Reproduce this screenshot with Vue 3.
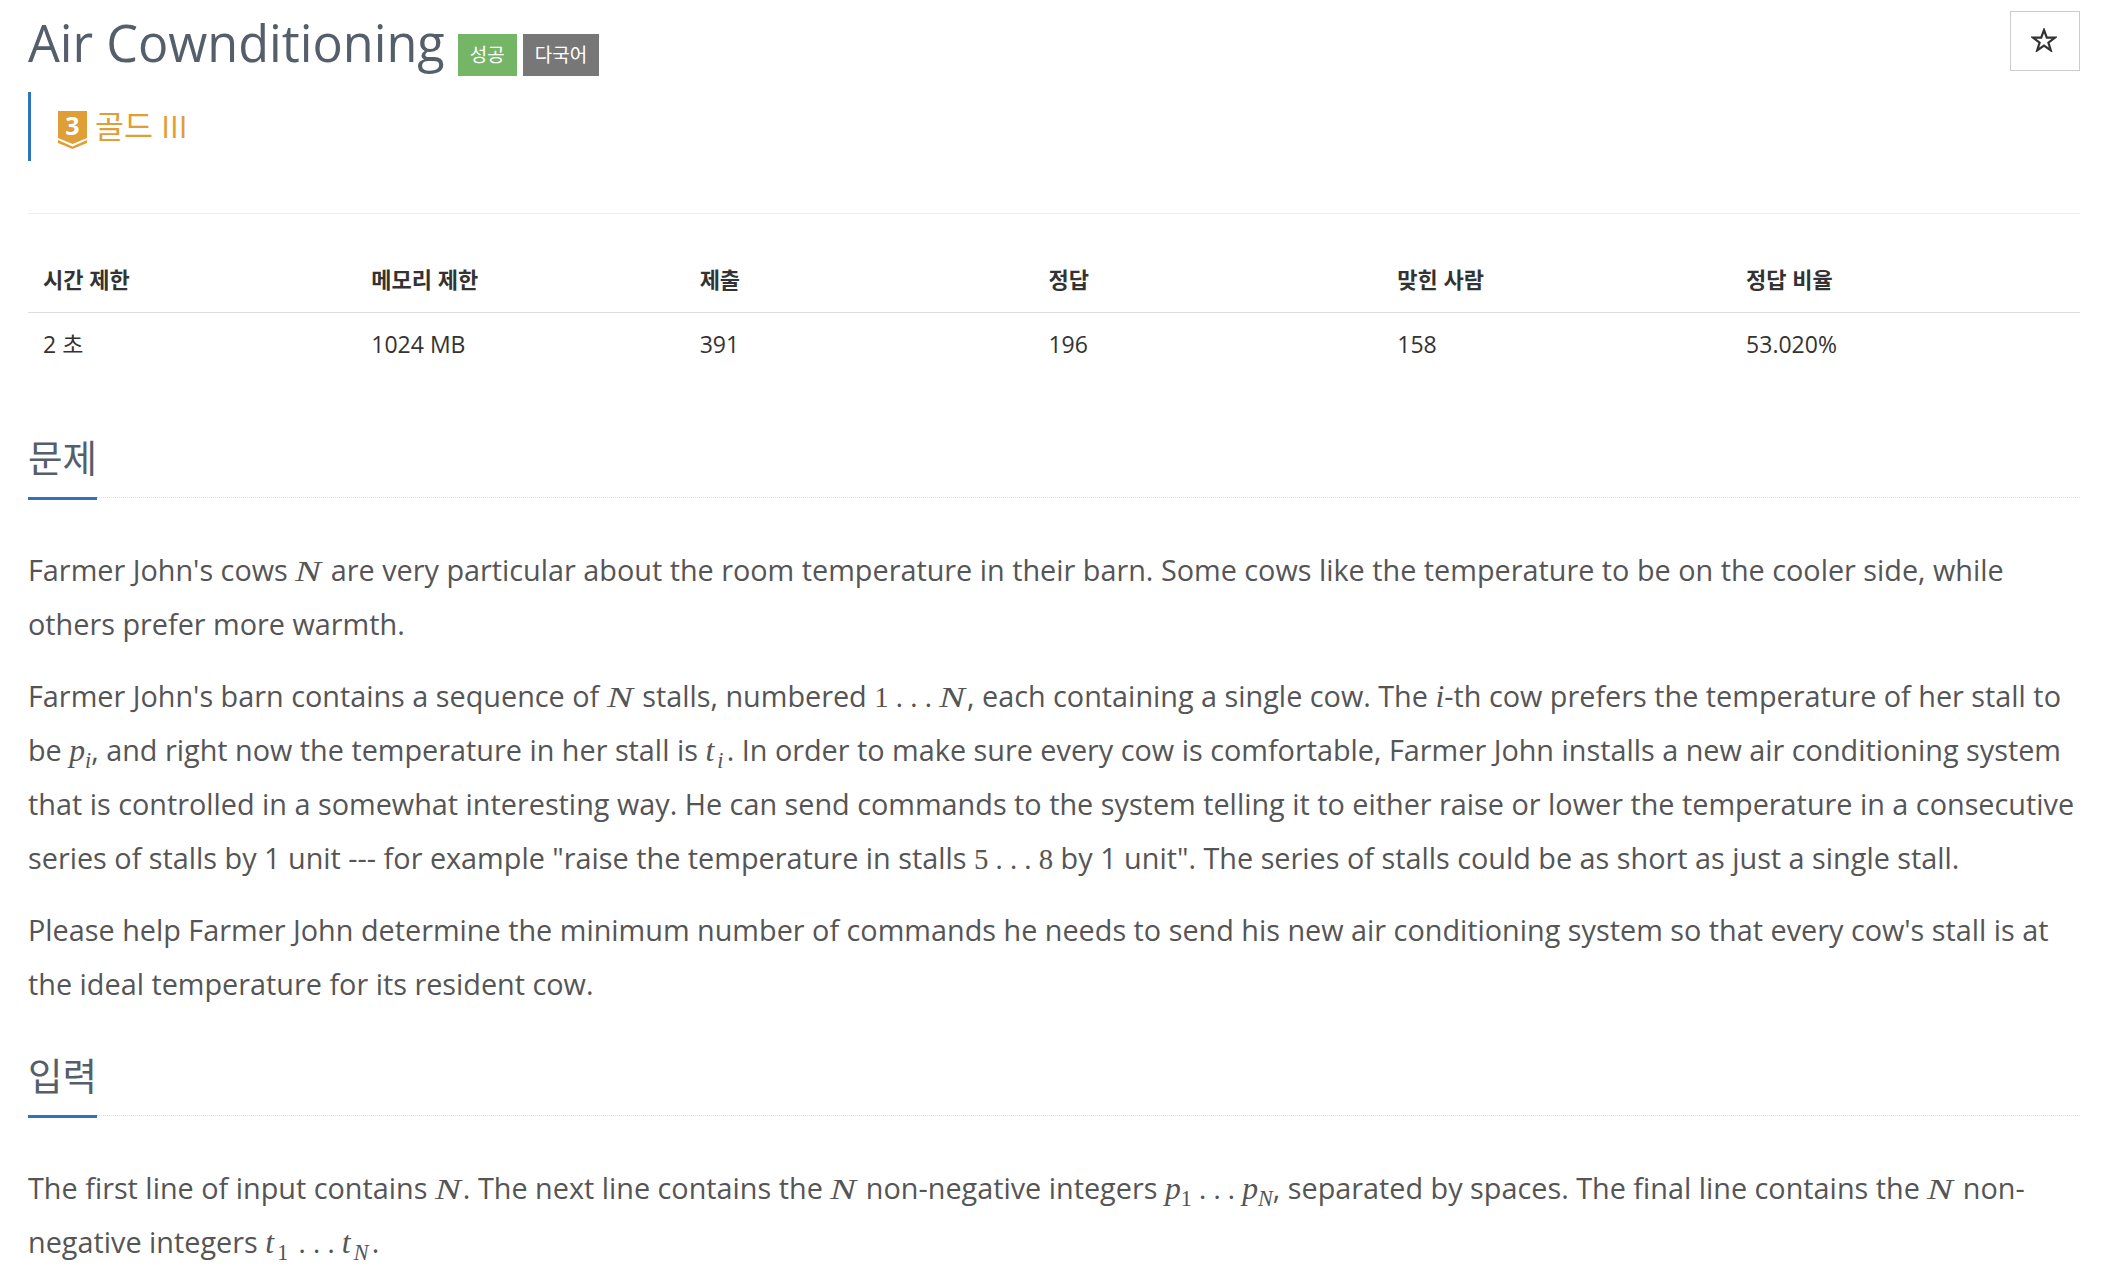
<template>
  <div class="page">
    <div class="top">
      <div class="top-left">
        <h1 class="title">
          <span>Air Cownditioning</span>
          <span class="label green">성공</span>
          <span class="label gray">다국어</span>
        </h1>
        <div class="tier">
          <svg class="tier-icon" viewBox="0 0 29 38" width="29" height="38">
            <path d="M0 0H29V27L14.500 33L0 27Z" fill="#e09e37" />
            <path d="M0 29L14.500 35.500L29 29V32L14.500 38L0 32Z" fill="#e09e37" />
            <text x="14.500" y="24" text-anchor="middle" class="tier-num">3</text>
          </svg>
          <span>골드 III</span>
        </div>
      </div>
      <button class="star" type="button">
        <svg viewBox="0 0 26 24" width="26" height="24">
          <path d="M13 2L15.800 9.700H24L17.400 14.600L19.800 22.400L13 17.700L6.200 22.400L8.600 14.600L2 9.700H10.200Z" fill="none" stroke="#333" stroke-width="2.200" />
        </svg>
      </button>
    </div>
    <hr class="divider" />

    <div class="info">
      <div v-for="col in stats" :key="col.head" class="info-col">
        <div class="info-head">{{ col.head }}</div>
        <div class="info-val">{{ col.val }}</div>
      </div>
    </div>

    <section class="first">
      <div class="headline"><h2>문제</h2></div>
      <p>Farmer John's cows <i class="n">N</i> are very particular about the room temperature in their barn. Some cows like the temperature to be on the cooler side, while others prefer more warmth.</p>
      <p>Farmer John's barn contains a sequence of <i class="n">N</i> stalls, numbered <span class="r">1 . . . </span><i class="n">N</i>, each containing a single cow. The <i class="m">i</i>-th cow prefers the temperature of her stall to be <i class="m">p<sub>i</sub></i>, and right now the temperature in her stall is <i class="m t">t<sub>i</sub></i>. In order to make sure every cow is comfortable, Farmer John installs a new air conditioning system that is controlled in a somewhat interesting way. He can send commands to the system telling it to either raise or lower the temperature in a consecutive series of stalls by 1 unit --- for example "raise the temperature in stalls <span class="r">5 . . . 8</span> by 1 unit". The series of stalls could be as short as just a single stall.</p>
      <p>Please help Farmer John determine the minimum number of commands he needs to send his new air conditioning system so that every cow's stall is at the ideal temperature for its resident cow.</p>
    </section>

    <section class="second">
      <div class="headline"><h2>입력</h2></div>
      <p>The first line of input contains <i class="n">N</i>. The next line contains the <i class="n">N</i> non-negative integers <i class="m">p<sub class="up">1</sub></i><span class="r"> . . . </span><i class="m">p<sub>N</sub></i>, separated by spaces. The final line contains the <i class="n">N</i> non-negative integers <i class="m t">t<sub class="up">1</sub></i><span class="r"> . . . </span><i class="m t">t<sub>N</sub></i>.</p>
    </section>
  </div>
</template>

<script setup>
const stats = [
  { head: '시간 제한', val: '2 초' },
  { head: '메모리 제한', val: '1024 MB' },
  { head: '제출', val: '391' },
  { head: '정답', val: '196' },
  { head: '맞힌 사람', val: '158' },
  { head: '정답 비율', val: '53.020%' },
]
</script>

<style>
html,
body {
  background: #fff;
  overflow: hidden;
}
</style>

<style scoped>
.page {
  height: 1288px;
  overflow: hidden;
  padding: 0 30px 0 28px;
  font-family: 'Open Sans', 'Noto Sans CJK KR', sans-serif;
  color: #555;
}

.top {
  display: flex;
  justify-content: space-between;
  align-items: flex-start;
}

.title {
  margin: 0;
  height: 92px;
  display: flex;
  align-items: flex-start;
  font-size: 50.400px;
  font-weight: 400;
  line-height: 86px;
  color: #555e6b;
}

.label {
  height: 42px;
  margin-top: 34px;
  padding: 0 12px;
  font-size: 19px;
  line-height: 42px;
  color: #fff;
}

.green {
  margin-left: 13px;
  background: #74b566;
}

.gray {
  margin-left: 6px;
  background: #777;
}

.tier {
  height: 69px;
  border-left: 3px solid #2e73bb;
  padding-left: 27px;
  display: flex;
  align-items: flex-start;
  gap: 8px;
  font-size: 31.500px;
  line-height: 67px;
  color: #e09e37;
}

.tier-icon {
  margin-top: 19px;
}

.tier-num {
  font-family: 'Open Sans', sans-serif;
  font-size: 25px;
  font-weight: 700;
  fill: #fff;
}

.star {
  width: 70px;
  height: 60px;
  margin-top: 11px;
  padding: 0 2px 2px 0;
  border: 1px solid #ccc;
  background: #fff;
  display: flex;
  align-items: center;
  justify-content: center;
}

.divider {
  margin: 52px 0 0;
  border: 0;
  border-top: 1px solid #eee;
}

.info {
  display: grid;
  grid-template-columns: 16% 16% 17% 17% 17% 17%;
  margin-top: 40px;
}

.info-head {
  height: 58px;
  padding: 0 15px;
  font-size: 22px;
  font-weight: 700;
  line-height: 51px;
  color: #333;
  border-bottom: 1px solid #ddd;
}

.info-val {
  padding: 0 15px;
  font-size: 23px;
  line-height: 62px;
  color: #333;
}

.first {
  margin-top: 54px;
}

.second {
  margin-top: 36px;
}

.headline {
  border-bottom: 1px dotted #ddd;
  height: 68px;
}

.headline h2 {
  display: inline-block;
  margin: 0;
  height: 68px;
  border-bottom: 3px solid #2e73bb;
  font-size: 37.500px;
  font-weight: 400;
  line-height: 58px;
  color: #555e6b;
}

p {
  margin: 0 0 18px;
  font-size: 28.800px;
  line-height: 54px;
}

.headline + p {
  margin-top: 45px;
}

.m {
  font-family: 'Liberation Serif', serif;
  font-style: italic;
  font-size: 1.1em;
  line-height: 1;
}

.t {
  letter-spacing: 0.1em;
}

/* math N is much wider than the serif one */
.n {
  display: inline-block;
  width: 28px;
  font-family: 'Liberation Serif', serif;
  font-size: 30px;
  line-height: 1;
  transform: scaleX(1.3);
  transform-origin: left;
}

.r {
  font-family: 'Liberation Serif', serif;
  line-height: 1;
}

sub {
  font-size: 0.7em;
  line-height: 0;
}

.up {
  font-style: normal;
}
</style>
